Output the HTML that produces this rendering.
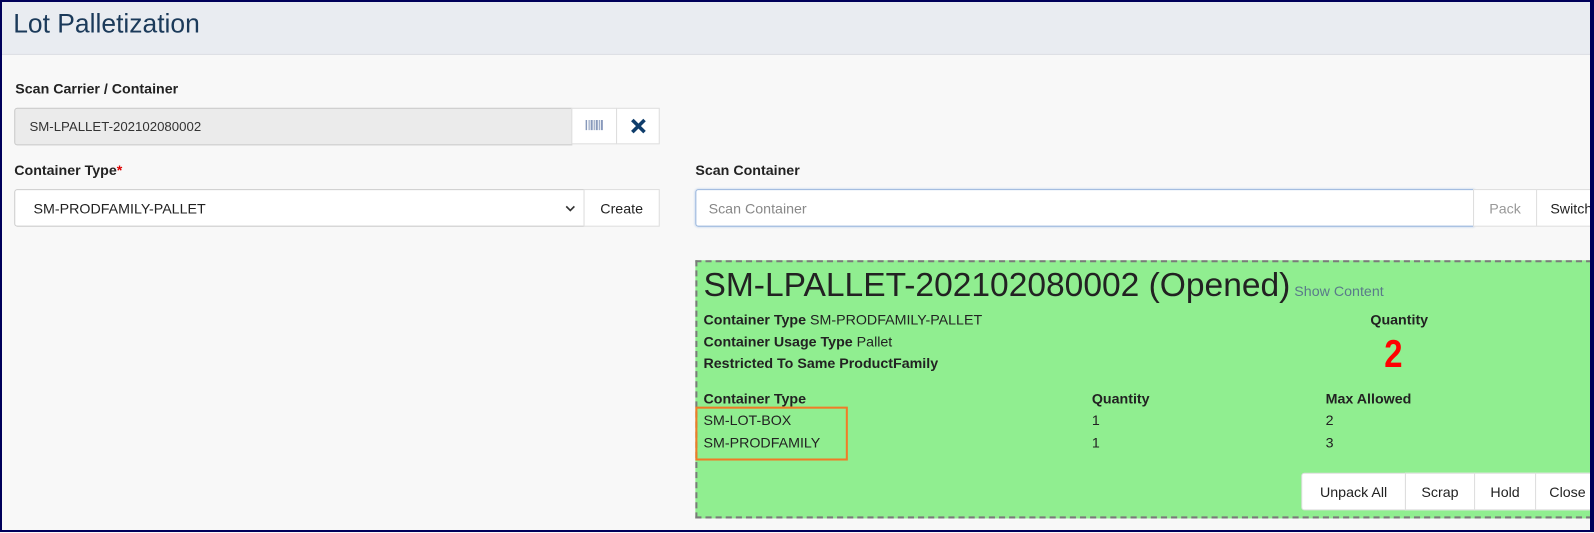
<!DOCTYPE html>
<html><head><style>
*{box-sizing:border-box;margin:0;padding:0}
body{width:1594px;height:532px;overflow:hidden;font-family:"Liberation Sans",sans-serif;font-size:14px;color:#222;background:#f8f8f8;position:relative}
.wrap{position:absolute;left:0;top:0;width:1568px;height:524px;transform:scale(1.0166);transform-origin:0 0}
.frame{position:absolute;inset:0;border:2px solid #00005a;border-right-width:4px;z-index:10;pointer-events:none}
.hdr{position:absolute;left:0;top:0;width:1594px;height:54px;background:#e9ecf1;border-bottom:1px solid #dcdfe4}
.hdr h1{position:absolute;left:13px;top:8px;font-weight:normal;font-size:26px;color:#1b3a5a}
.abs{position:absolute}
.lbl{font-weight:bold;font-size:14px;color:#222}
.box{position:absolute;border:1px solid #ccc;background:#fff;display:flex;align-items:center;font-size:14px}
.btn{position:absolute;border:1px solid #ddd;background:#fff;display:flex;align-items:center;justify-content:center;font-size:14px;color:#333}
.green{position:absolute;left:684px;top:256px;width:912px;height:254px;background:#90ee90;border:2px dashed #7a7a7a}
.b{font-weight:bold}
</style></head><body>
<div class="wrap">
<div class="hdr"><h1>Lot Palletization</h1></div>
<div class="abs lbl" style="left:15px;top:79px">Scan Carrier / Container</div>
<div class="box" style="left:14px;top:106px;width:549px;height:37px;background:#ebebeb;border-color:#c8c8c8;border-radius:3px 0 0 3px;padding-left:14px;font-size:13px;color:#333">SM-LPALLET-202102080002</div>
<div class="btn" style="left:562px;top:106px;width:45px;height:36px"><svg width="18" height="12"><g fill="#8899bb"><rect x="0" y="0" width="1.5" height="10"/><rect x="3" y="0" width="1" height="10"/><rect x="5" y="0" width="2" height="10"/><rect x="8" y="0" width="1" height="10"/><rect x="10" y="0" width="2" height="10"/><rect x="13" y="0" width="1" height="10"/><rect x="15" y="0" width="2" height="10"/></g></svg></div>
<div class="btn" style="left:606px;top:106px;width:43px;height:36px"><svg width="16" height="16"><path d="M2 2L14 14M14 2L2 14" stroke="#0f3d6b" stroke-width="3.5"/></svg></div>
<div class="abs lbl" style="left:14px;top:159px">Container Type<span style="color:#d00">*</span></div>
<div class="box" style="left:14px;top:186px;width:561px;height:37px;border-radius:3px 0 0 3px;padding-left:18px;color:#222">SM-PRODFAMILY-PALLET<svg class="abs" style="left:541px;top:14px" width="10" height="8"><path d="M1 2L5 6L9 2" stroke="#333" stroke-width="1.6" fill="none"/></svg></div>
<div class="btn" style="left:574px;top:186px;width:75px;height:37px;color:#222">Create</div>
<div class="abs lbl" style="left:684px;top:159px">Scan Container</div>
<div class="box" style="left:684px;top:186px;width:766px;height:37px;border-color:#9db8dd;border-radius:3px 0 0 3px;padding-left:12px;color:#888;box-shadow:0 0 2px #b7cdea">Scan Container</div>
<div class="btn" style="left:1449px;top:186px;width:63px;height:37px;color:#999">Pack</div>
<div class="btn" style="left:1511px;top:186px;width:90px;height:37px;justify-content:flex-start;padding-left:13px;color:#222">Switch</div>
<div class="green">
<div class="abs" style="left:6px;top:3px;font-size:33px;color:#222;white-space:nowrap">SM-LPALLET-202102080002 (Opened)<span style="font-size:14px;color:#5a7a8a"> Show Content</span></div>
<div class="abs" style="left:6px;top:48px"><span class="b">Container Type</span> SM-PRODFAMILY-PALLET</div>
<div class="abs" style="left:6px;top:70px"><span class="b">Container Usage Type</span> Pallet</div>
<div class="abs" style="left:6px;top:91px" ><span class="b">Restricted To Same ProductFamily</span></div>
<div class="abs b" style="left:662px;top:48px">Quantity</div>
<div class="abs" style="left:674px;top:70px;font-size:38px;font-weight:bold;color:#f00;transform:scaleX(0.85)">2</div>
<div class="abs b" style="left:6px;top:126px">Container Type</div>
<div class="abs b" style="left:388px;top:126px">Quantity</div>
<div class="abs b" style="left:618px;top:126px">Max Allowed</div>
<div class="abs" style="left:6px;top:147px">SM-LOT-BOX</div>
<div class="abs" style="left:388px;top:147px">1</div>
<div class="abs" style="left:618px;top:147px">2</div>
<div class="abs" style="left:6px;top:169px">SM-PRODFAMILY</div>
<div class="abs" style="left:388px;top:169px">1</div>
<div class="abs" style="left:618px;top:169px">3</div>
<div class="abs" style="left:-2px;top:142px;width:150px;height:53px;border:2px solid #f07b27"></div>
</div>
<div class="btn" style="left:1280px;top:465px;width:103px;height:37px;border-radius:3px 0 0 3px;color:#222">Unpack All</div>
<div class="btn" style="left:1382px;top:465px;width:69px;height:37px;color:#222">Scrap</div>
<div class="btn" style="left:1450px;top:465px;width:61px;height:37px;color:#222">Hold</div>
<div class="btn" style="left:1510px;top:465px;width:90px;height:37px;justify-content:flex-start;padding-left:13px;color:#222">Close</div>
</div>
<div class="frame"></div>
</body></html>
